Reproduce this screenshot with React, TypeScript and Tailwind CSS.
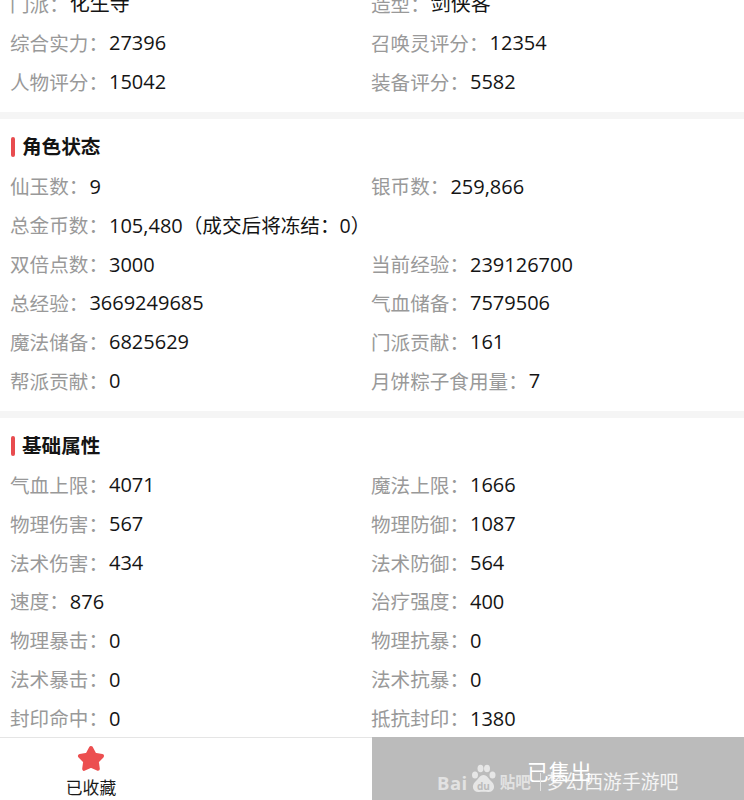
const font = { fontFamily: '"Open Sans", "Noto Sans CJK SC", sans-serif' };

type Item = [string, string];

function Row({ item, note }: { item: Item; note?: string }) {
  return (
    <div className="h-[38.9px] flex items-center whitespace-nowrap">
      <span className="text-[#999999] text-[19.6px]">{item[0]}：</span>
      <span className="text-[#141414] text-[20px] ml-px">{item[1]}</span>
      {note ? <span className="text-[#141414] text-[19.6px]">{note}</span> : null}
    </div>
  );
}

function Grid({ items }: { items: Item[] }) {
  return (
    <div className="grid grid-cols-[361px_1fr] pl-[10px]">
      {items.map((it, i) => (
        <Row key={i} item={it} />
      ))}
    </div>
  );
}

function Heading({ title }: { title: string }) {
  return (
    <div className="h-[29px] flex items-center pl-[11px] gap-[7px] mb-[5.7px]">
      <span className="w-[4px] h-[20px] rounded-[2px] bg-[#e84c4f]" />
      <span className="font-bold text-[#141414] text-[19.6px]">{title}</span>
    </div>
  );
}

const top: Item[] = [
  ['门派', '化生寺'], ['造型', '剑侠客'],
  ['综合实力', '27396'], ['召唤灵评分', '12354'],
  ['人物评分', '15042'], ['装备评分', '5582'],
];
const status: Item[] = [
  ['仙玉数', '9'], ['银币数', '259,866'],
];
const status2: Item[] = [
  ['双倍点数', '3000'], ['当前经验', '239126700'],
  ['总经验', '3669249685'], ['气血储备', '7579506'],
  ['魔法储备', '6825629'], ['门派贡献', '161'],
  ['帮派贡献', '0'], ['月饼粽子食用量', '7'],
];
const base: Item[] = [
  ['气血上限', '4071'], ['魔法上限', '1666'],
  ['物理伤害', '567'], ['物理防御', '1087'],
  ['法术伤害', '434'], ['法术防御', '564'],
  ['速度', '876'], ['治疗强度', '400'],
  ['物理暴击', '0'], ['物理抗暴', '0'],
  ['法术暴击', '0'], ['法术抗暴', '0'],
  ['封印命中', '0'], ['抵抗封印', '1380'],
];

export default function App() {
  return (
    <div style={font} className="relative w-[744px] h-[800px] overflow-hidden bg-white flex flex-col text-[19.84px]">
      <div className="flex-1 overflow-hidden">
        <div className="-mt-[15px]">
          <Grid items={top} />
          <div className="h-[7px] mt-[10px] bg-[#f5f5f5]" />
          <div className="pt-[14px]">
            <Heading title="角色状态" />
            <Grid items={status} />
            <div className="pl-[10px]">
              <Row item={['总金币数', '105,480']} note="（成交后将冻结：0）" />
            </div>
            <Grid items={status2} />
          </div>
          <div className="h-[7px] mt-[10px] bg-[#f5f5f5]" />
          <div className="pt-[13.6px]">
            <Heading title="基础属性" />
            <Grid items={base} />
          </div>
        </div>
      </div>
      <div className="h-[63px] shrink-0 flex border-t border-[#e5e5e5] bg-white">
        <div className="w-[372px] pr-[190px] flex flex-col items-center">
          <svg className="mt-[7px]" width="28" height="27" viewBox="0 0 28 27">
            <path
              d="M14 3 L17.6 9.6 L25 11 L19.8 16.4 L20.8 23.8 L14 20.6 L7.2 23.8 L8.2 16.4 L3 11 L10.4 9.6 Z"
              fill="#ec4f50"
              stroke="#ec4f50"
              strokeWidth="4"
              strokeLinejoin="round"
            />
          </svg>
          <span className="text-[16.8px] leading-[24px] text-[#1a1a1a] mt-[4px]">已收藏</span>
        </div>
        <div className="relative flex-1 -mt-px bg-[#bbbbbb] flex items-center justify-center pt-[8px] pl-[3px] text-white text-[21.6px]">
          已售出
          <div className="absolute left-[65px] top-[24px] flex items-center text-[18.8px] text-white/85 whitespace-nowrap">
            <span className="font-bold text-[18.5px] text-[#e2e2e2] tracking-[0.5px] mt-[8px]">Bai</span>
            <svg width="29" height="29" viewBox="0 0 29 29" className="ml-px">
              <g fill="#e6e6e6">
                <ellipse cx="6" cy="11" rx="3" ry="3.6" />
                <ellipse cx="11.5" cy="4.5" rx="3" ry="3.8" />
                <ellipse cx="18" cy="4.5" rx="3" ry="3.8" />
                <ellipse cx="23.5" cy="11" rx="3" ry="3.6" />
                <path d="M14.5 11 C10.5 11 9.5 15 6 18 C2 22 4 28.5 10 28 C12.5 27.6 16.5 27.6 19 28 C25 28.5 27 22 23 18 C19.5 15 18.5 11 14.5 11 Z" />
              </g>
              <text x="8" y="26" fontSize="10" fontWeight="700" fill="#bbbbbb">du</text>
            </svg>
            <span className="text-[15.5px] text-[#e2e2e2] font-bold mt-[8px] ml-[2px]">贴吧</span>
            <span className="ml-[9px] w-px h-[18px] mt-[6px] bg-[#e4e4e4]" />
            <span className="ml-[6px] mt-[6px]">梦幻西游手游吧</span>
          </div>
        </div>
      </div>
    </div>
  );
}
